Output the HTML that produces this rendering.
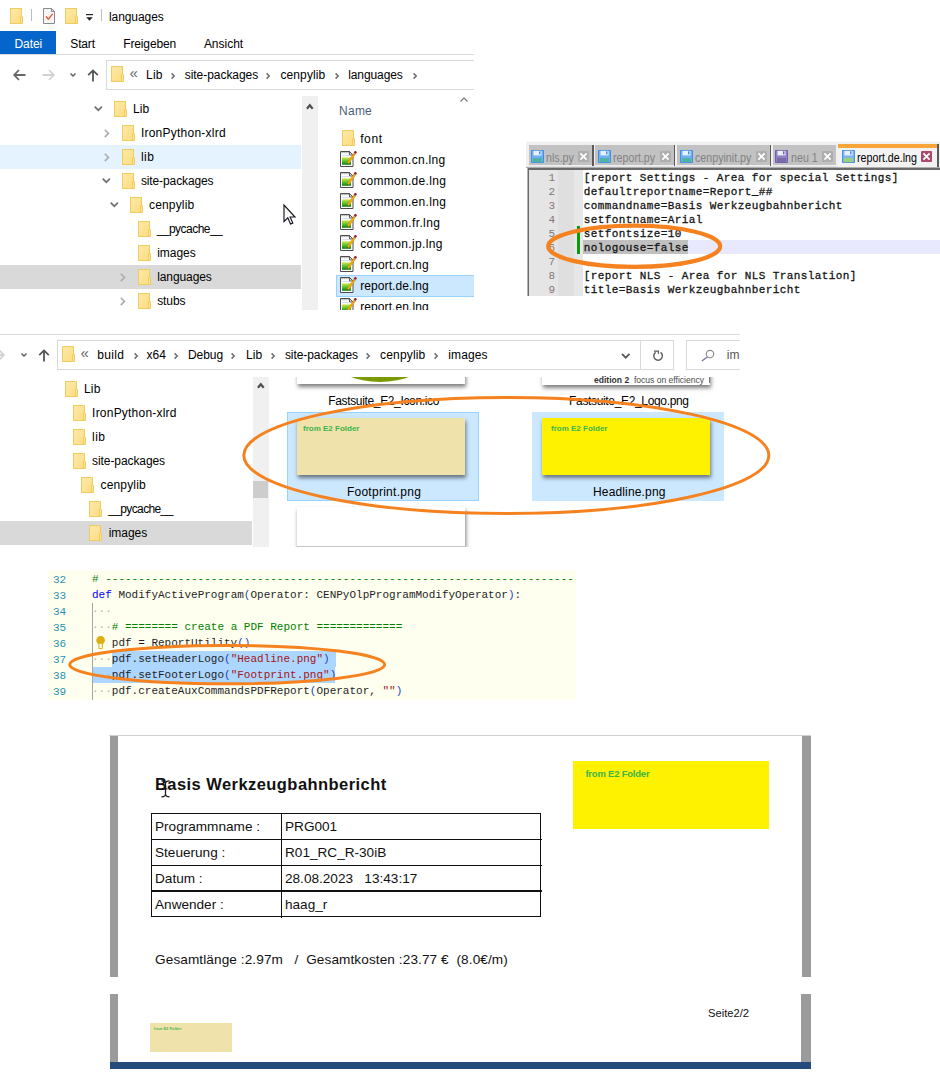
<!DOCTYPE html>
<html lang="de">
<head>
<meta charset="utf-8">
<title>languages</title>
<style>
html,body{margin:0;padding:0;background:#fff;}
body{width:940px;height:1072px;position:relative;overflow:hidden;font-family:"Liberation Sans",sans-serif;font-size:12px;color:#000;}
.a{position:absolute;}
.t{position:absolute;white-space:pre;line-height:16px;height:16px;font-size:12px;color:#000;}
svg{position:absolute;overflow:visible;}
.mono{font-family:"Liberation Mono",monospace;}
.fo{position:absolute;width:10px;height:14px;border:1px solid #efcb62;background:linear-gradient(135deg,#fde9a6,#fbdd83);border-radius:0.5px;}
.fo:after{content:"";position:absolute;right:-2px;bottom:-1px;width:1px;height:6px;border:1px solid #efcb62;background:#fde595;border-radius:1px 1px 0 0;}
</style>
</head>
<body>
<svg width="0" height="0" style="left:0;top:0;"><defs><linearGradient id="lg" x1="0" y1="0" x2="0" y2="1"><stop offset="0" stop-color="#d4e646"/><stop offset="0.55" stop-color="#4fbf2a"/><stop offset="1" stop-color="#0c7f10"/></linearGradient></defs></svg>
<div id="ex1" class="a" style="left:0;top:0;width:940px;height:1072px;clip-path:inset(0px 466px 762px 0px);">
<div class="a" style="left:0px;top:0px;width:474px;height:310px;background:#fff;"></div>
<div class="fo" style="left:10px;top:7.5px;"></div>
<div class="a" style="left:31px;top:9px;width:1px;height:12px;background:#bdbdbd;"></div>
<svg style="left:43px;top:8px;" width="13" height="16" viewBox="0 0 13 16"><path d="M0.5 0.5h8l3 3v12h-11z" fill="#f6f6f6" stroke="#8a8a8a" stroke-width="1"/><path d="M8.5 0.5v3h3" fill="none" stroke="#8a8a8a" stroke-width="1"/><path d="M3 8.5l2.3 2.6 4.4-5.2" fill="none" stroke="#e8562a" stroke-width="1.4"/></svg>
<div class="fo" style="left:65px;top:8px;"></div>
<svg style="left:86px;top:14px;" width="7" height="8" viewBox="0 0 7 8"><rect x="0" y="0" width="7" height="1.2" fill="#222"/><path d="M0.2 3.2h6.6L3.5 6.8z" fill="#222"/></svg>
<div class="a" style="left:101px;top:9px;width:1px;height:12px;background:#bdbdbd;"></div>
<span class="t" style="left:108.98px;top:8.5px;letter-spacing:-0.072px;">languages</span>
<div class="a" style="left:0px;top:31px;width:56px;height:23px;background:#0665cb;"></div>
<span class="t" style="left:14.38px;top:35.7px;color:#fff;letter-spacing:-0.035px;">Datei</span>
<span class="t" style="left:70.28px;top:35.7px;letter-spacing:-0.141px;">Start</span>
<span class="t" style="left:123.28px;top:35.7px;letter-spacing:-0.145px;">Freigeben</span>
<span class="t" style="left:203.88px;top:35.7px;letter-spacing:-0.017px;">Ansicht</span>
<div class="a" style="left:0px;top:54px;width:474px;height:1px;background:#dadbdc;"></div>
<svg style="left:13px;top:69px;" width="13" height="12" viewBox="0 0 13 12"><path d="M12.5 6H1.4M6 1L1.2 6l4.8 5" fill="none" stroke="#666" stroke-width="1.8"/></svg>
<svg style="left:42px;top:69px;" width="13" height="12" viewBox="0 0 13 12"><path d="M0.5 6H11.6M7 1l4.8 5-4.8 5" fill="none" stroke="#d2d2d2" stroke-width="1.8"/></svg>
<svg style="left:70px;top:72.5px;" width="6" height="4" viewBox="0 0 6 4"><path d="M0.5 0.5L3 3 5.5 0.5" fill="none" stroke="#5a5a5a" stroke-width="1.4"/></svg>
<svg style="left:87px;top:68.5px;" width="12" height="13" viewBox="0 0 12 13"><path d="M6 12.5V1.6M1.2 6.2l4.8-4.8 4.8 4.8" fill="none" stroke="#555" stroke-width="1.8"/></svg>
<div class="a" style="left:106px;top:60px;width:380px;height:28px;border:1px solid #d9d9d9;background:#fff;"></div>
<div class="fo" style="left:111px;top:66px;"></div>
<span class="t" style="left:129.5px;top:65.2px;font-size:15px;color:#666;">«</span>
<span class="t" style="left:145.98px;top:67px;letter-spacing:0.241px;">Lib</span>
<svg style="left:171px;top:72.5px;" width="4" height="6" viewBox="0 0 4 6"><path d="M0.6 0.4 L3.2 3 L0.6 5.6" fill="none" stroke="#6d6d6d" stroke-width="1.5"/></svg>
<span class="t" style="left:184.78px;top:67px;letter-spacing:-0.047px;">site-packages</span>
<svg style="left:266px;top:72.5px;" width="4" height="6" viewBox="0 0 4 6"><path d="M0.6 0.4 L3.2 3 L0.6 5.6" fill="none" stroke="#6d6d6d" stroke-width="1.5"/></svg>
<span class="t" style="left:280.48px;top:67px;letter-spacing:0.101px;">cenpylib</span>
<svg style="left:335px;top:72.5px;" width="4" height="6" viewBox="0 0 4 6"><path d="M0.6 0.4 L3.2 3 L0.6 5.6" fill="none" stroke="#6d6d6d" stroke-width="1.5"/></svg>
<span class="t" style="left:348.18px;top:67px;letter-spacing:-0.095px;">languages</span>
<svg style="left:413px;top:72.5px;" width="4" height="6" viewBox="0 0 4 6"><path d="M0.6 0.4 L3.2 3 L0.6 5.6" fill="none" stroke="#6d6d6d" stroke-width="1.5"/></svg>
<div class="a" style="left:0px;top:145px;width:301px;height:24px;background:#e5f3ff;"></div>
<div class="a" style="left:0px;top:265px;width:301px;height:24px;background:#d9d9d9;"></div>
<div class="fo" style="left:114px;top:101px;"></div>
<span class="t" style="left:132.98px;top:101px;letter-spacing:0.075px;">Lib</span>
<svg style="left:94.39999999999999px;top:106.2px;" width="8.6" height="5" viewBox="0 0 8.6 5"><path d="M0.7 0.7 L4.3 4.2 L7.9 0.7" fill="none" stroke="#727272" stroke-width="1.7"/></svg>
<div class="fo" style="left:122px;top:125px;"></div>
<span class="t" style="left:140.88px;top:125px;letter-spacing:0.238px;">IronPython-xlrd</span>
<svg style="left:104px;top:129.1px;" width="5.5" height="9" viewBox="0 0 5.5 9"><path d="M0.8 0.7 L4.5 4.4 L0.8 8.1" fill="none" stroke="#adadad" stroke-width="1.6"/></svg>
<div class="fo" style="left:122px;top:149px;"></div>
<span class="t" style="left:140.88px;top:149px;letter-spacing:0.475px;">lib</span>
<svg style="left:104px;top:153.1px;" width="5.5" height="9" viewBox="0 0 5.5 9"><path d="M0.8 0.7 L4.5 4.4 L0.8 8.1" fill="none" stroke="#adadad" stroke-width="1.6"/></svg>
<div class="fo" style="left:122px;top:173px;"></div>
<span class="t" style="left:140.88px;top:173px;letter-spacing:-0.108px;">site-packages</span>
<svg style="left:101.8px;top:178.2px;" width="8.6" height="5" viewBox="0 0 8.6 5"><path d="M0.7 0.7 L4.3 4.2 L7.9 0.7" fill="none" stroke="#727272" stroke-width="1.7"/></svg>
<div class="fo" style="left:130px;top:197px;"></div>
<span class="t" style="left:148.98px;top:197px;letter-spacing:0.176px;">cenpylib</span>
<svg style="left:109.6px;top:202.2px;" width="8.6" height="5" viewBox="0 0 8.6 5"><path d="M0.7 0.7 L4.3 4.2 L7.9 0.7" fill="none" stroke="#727272" stroke-width="1.7"/></svg>
<div class="fo" style="left:138px;top:221px;"></div>
<span class="t" style="left:156.68px;top:221px;letter-spacing:-0.532px;">__pycache__</span>
<div class="fo" style="left:138px;top:245px;"></div>
<span class="t" style="left:157.18px;top:245px;letter-spacing:-0.041px;">images</span>
<div class="fo" style="left:138px;top:269px;"></div>
<span class="t" style="left:157.18px;top:269px;letter-spacing:-0.095px;">languages</span>
<svg style="left:120px;top:273.1px;" width="5.5" height="9" viewBox="0 0 5.5 9"><path d="M0.8 0.7 L4.5 4.4 L0.8 8.1" fill="none" stroke="#adadad" stroke-width="1.6"/></svg>
<div class="fo" style="left:138px;top:293px;"></div>
<span class="t" style="left:157.18px;top:293px;letter-spacing:-0.09px;">stubs</span>
<svg style="left:120px;top:297.1px;" width="5.5" height="9" viewBox="0 0 5.5 9"><path d="M0.8 0.7 L4.5 4.4 L0.8 8.1" fill="none" stroke="#adadad" stroke-width="1.6"/></svg>
<div class="a" style="left:302px;top:96px;width:16px;height:214px;background:#f0f0f0;"></div>
<svg style="left:306px;top:103px;" width="8" height="6" viewBox="0 0 8 6"><path d="M0.9 5.8L3.8 2.2 6.7 5.8" fill="none" stroke="#505050" stroke-width="2.2"/></svg>
<span class="t" style="left:339.08px;top:102.5px;color:#4c607a;letter-spacing:0.231px;">Name</span>
<svg style="left:459.5px;top:96.5px;" width="8" height="5" viewBox="0 0 8 5"><path d="M0.5 4.5L4 1 7.5 4.5" fill="none" stroke="#7a7a7a" stroke-width="1.2"/></svg>
<div class="a" style="left:336px;top:275px;width:150px;height:20px;border:1px solid #99d1ff;background:#cce8ff;"></div>
<div class="fo" style="left:342px;top:130px;"></div>
<span class="t" style="left:360.18px;top:131.3px;letter-spacing:0.606px;">font</span>
<svg style="left:340px;top:150px;" width="17" height="17" viewBox="0 0 17 17"><path d="M0.5 1.5h9l3.5 3.5v11.5h-12.5z" fill="#fff" stroke="#4c4c4c" stroke-width="1"/><path d="M9.5 1.5v3.5h3.5z" fill="#e4e4e4" stroke="#4c4c4c" stroke-width="0.9"/><path d="M1.6 2.6h7" stroke="#8a8a8a" stroke-width="1.2" stroke-dasharray="1 1"/><path d="M2 5.6h7" stroke="#c9d8ee" stroke-width="0.9"/><rect x="2" y="7.4" width="9" height="7.4" fill="url(#lg)"/><path d="M14.3 2.2 L16 3.4 L9.2 13.2 L7.2 14.2 L7.6 12 Z" fill="#f7a916" stroke="#c07a08" stroke-width="0.4"/><path d="M14.3 2.2 L16 3.4 L15.3 4.4 L13.6 3.2 Z" fill="#9aa6b8"/><circle cx="15.4" cy="2.2" r="1.25" fill="#a01818"/><path d="M7.2 14.2 L7.45 12.9 L8.3 13.6 Z" fill="#3a2a1a"/></svg>
<span class="t" style="left:360.18px;top:152.3px;letter-spacing:0.305px;">common.cn.lng</span>
<svg style="left:340px;top:171px;" width="17" height="17" viewBox="0 0 17 17"><path d="M0.5 1.5h9l3.5 3.5v11.5h-12.5z" fill="#fff" stroke="#4c4c4c" stroke-width="1"/><path d="M9.5 1.5v3.5h3.5z" fill="#e4e4e4" stroke="#4c4c4c" stroke-width="0.9"/><path d="M1.6 2.6h7" stroke="#8a8a8a" stroke-width="1.2" stroke-dasharray="1 1"/><path d="M2 5.6h7" stroke="#c9d8ee" stroke-width="0.9"/><rect x="2" y="7.4" width="9" height="7.4" fill="url(#lg)"/><path d="M14.3 2.2 L16 3.4 L9.2 13.2 L7.2 14.2 L7.6 12 Z" fill="#f7a916" stroke="#c07a08" stroke-width="0.4"/><path d="M14.3 2.2 L16 3.4 L15.3 4.4 L13.6 3.2 Z" fill="#9aa6b8"/><circle cx="15.4" cy="2.2" r="1.25" fill="#a01818"/><path d="M7.2 14.2 L7.45 12.9 L8.3 13.6 Z" fill="#3a2a1a"/></svg>
<span class="t" style="left:360.18px;top:173.3px;letter-spacing:0.299px;">common.de.lng</span>
<svg style="left:340px;top:192px;" width="17" height="17" viewBox="0 0 17 17"><path d="M0.5 1.5h9l3.5 3.5v11.5h-12.5z" fill="#fff" stroke="#4c4c4c" stroke-width="1"/><path d="M9.5 1.5v3.5h3.5z" fill="#e4e4e4" stroke="#4c4c4c" stroke-width="0.9"/><path d="M1.6 2.6h7" stroke="#8a8a8a" stroke-width="1.2" stroke-dasharray="1 1"/><path d="M2 5.6h7" stroke="#c9d8ee" stroke-width="0.9"/><rect x="2" y="7.4" width="9" height="7.4" fill="url(#lg)"/><path d="M14.3 2.2 L16 3.4 L9.2 13.2 L7.2 14.2 L7.6 12 Z" fill="#f7a916" stroke="#c07a08" stroke-width="0.4"/><path d="M14.3 2.2 L16 3.4 L15.3 4.4 L13.6 3.2 Z" fill="#9aa6b8"/><circle cx="15.4" cy="2.2" r="1.25" fill="#a01818"/><path d="M7.2 14.2 L7.45 12.9 L8.3 13.6 Z" fill="#3a2a1a"/></svg>
<span class="t" style="left:360.18px;top:194.3px;letter-spacing:0.299px;">common.en.lng</span>
<svg style="left:340px;top:213px;" width="17" height="17" viewBox="0 0 17 17"><path d="M0.5 1.5h9l3.5 3.5v11.5h-12.5z" fill="#fff" stroke="#4c4c4c" stroke-width="1"/><path d="M9.5 1.5v3.5h3.5z" fill="#e4e4e4" stroke="#4c4c4c" stroke-width="0.9"/><path d="M1.6 2.6h7" stroke="#8a8a8a" stroke-width="1.2" stroke-dasharray="1 1"/><path d="M2 5.6h7" stroke="#c9d8ee" stroke-width="0.9"/><rect x="2" y="7.4" width="9" height="7.4" fill="url(#lg)"/><path d="M14.3 2.2 L16 3.4 L9.2 13.2 L7.2 14.2 L7.6 12 Z" fill="#f7a916" stroke="#c07a08" stroke-width="0.4"/><path d="M14.3 2.2 L16 3.4 L15.3 4.4 L13.6 3.2 Z" fill="#9aa6b8"/><circle cx="15.4" cy="2.2" r="1.25" fill="#a01818"/><path d="M7.2 14.2 L7.45 12.9 L8.3 13.6 Z" fill="#3a2a1a"/></svg>
<span class="t" style="left:360.18px;top:215.3px;letter-spacing:0.359px;">common.fr.lng</span>
<svg style="left:340px;top:234px;" width="17" height="17" viewBox="0 0 17 17"><path d="M0.5 1.5h9l3.5 3.5v11.5h-12.5z" fill="#fff" stroke="#4c4c4c" stroke-width="1"/><path d="M9.5 1.5v3.5h3.5z" fill="#e4e4e4" stroke="#4c4c4c" stroke-width="0.9"/><path d="M1.6 2.6h7" stroke="#8a8a8a" stroke-width="1.2" stroke-dasharray="1 1"/><path d="M2 5.6h7" stroke="#c9d8ee" stroke-width="0.9"/><rect x="2" y="7.4" width="9" height="7.4" fill="url(#lg)"/><path d="M14.3 2.2 L16 3.4 L9.2 13.2 L7.2 14.2 L7.6 12 Z" fill="#f7a916" stroke="#c07a08" stroke-width="0.4"/><path d="M14.3 2.2 L16 3.4 L15.3 4.4 L13.6 3.2 Z" fill="#9aa6b8"/><circle cx="15.4" cy="2.2" r="1.25" fill="#a01818"/><path d="M7.2 14.2 L7.45 12.9 L8.3 13.6 Z" fill="#3a2a1a"/></svg>
<span class="t" style="left:360.18px;top:236.3px;letter-spacing:0.353px;">common.jp.lng</span>
<svg style="left:340px;top:255px;" width="17" height="17" viewBox="0 0 17 17"><path d="M0.5 1.5h9l3.5 3.5v11.5h-12.5z" fill="#fff" stroke="#4c4c4c" stroke-width="1"/><path d="M9.5 1.5v3.5h3.5z" fill="#e4e4e4" stroke="#4c4c4c" stroke-width="0.9"/><path d="M1.6 2.6h7" stroke="#8a8a8a" stroke-width="1.2" stroke-dasharray="1 1"/><path d="M2 5.6h7" stroke="#c9d8ee" stroke-width="0.9"/><rect x="2" y="7.4" width="9" height="7.4" fill="url(#lg)"/><path d="M14.3 2.2 L16 3.4 L9.2 13.2 L7.2 14.2 L7.6 12 Z" fill="#f7a916" stroke="#c07a08" stroke-width="0.4"/><path d="M14.3 2.2 L16 3.4 L15.3 4.4 L13.6 3.2 Z" fill="#9aa6b8"/><circle cx="15.4" cy="2.2" r="1.25" fill="#a01818"/><path d="M7.2 14.2 L7.45 12.9 L8.3 13.6 Z" fill="#3a2a1a"/></svg>
<span class="t" style="left:360.18px;top:257.3px;letter-spacing:0.141px;">report.cn.lng</span>
<svg style="left:340px;top:276px;" width="17" height="17" viewBox="0 0 17 17"><path d="M0.5 1.5h9l3.5 3.5v11.5h-12.5z" fill="#fff" stroke="#4c4c4c" stroke-width="1"/><path d="M9.5 1.5v3.5h3.5z" fill="#e4e4e4" stroke="#4c4c4c" stroke-width="0.9"/><path d="M1.6 2.6h7" stroke="#8a8a8a" stroke-width="1.2" stroke-dasharray="1 1"/><path d="M2 5.6h7" stroke="#c9d8ee" stroke-width="0.9"/><rect x="2" y="7.4" width="9" height="7.4" fill="url(#lg)"/><path d="M14.3 2.2 L16 3.4 L9.2 13.2 L7.2 14.2 L7.6 12 Z" fill="#f7a916" stroke="#c07a08" stroke-width="0.4"/><path d="M14.3 2.2 L16 3.4 L15.3 4.4 L13.6 3.2 Z" fill="#9aa6b8"/><circle cx="15.4" cy="2.2" r="1.25" fill="#a01818"/><path d="M7.2 14.2 L7.45 12.9 L8.3 13.6 Z" fill="#3a2a1a"/></svg>
<span class="t" style="left:360.18px;top:278.3px;letter-spacing:0.088px;">report.de.lng</span>
<svg style="left:340px;top:297px;" width="17" height="17" viewBox="0 0 17 17"><path d="M0.5 1.5h9l3.5 3.5v11.5h-12.5z" fill="#fff" stroke="#4c4c4c" stroke-width="1"/><path d="M9.5 1.5v3.5h3.5z" fill="#e4e4e4" stroke="#4c4c4c" stroke-width="0.9"/><path d="M1.6 2.6h7" stroke="#8a8a8a" stroke-width="1.2" stroke-dasharray="1 1"/><path d="M2 5.6h7" stroke="#c9d8ee" stroke-width="0.9"/><rect x="2" y="7.4" width="9" height="7.4" fill="url(#lg)"/><path d="M14.3 2.2 L16 3.4 L9.2 13.2 L7.2 14.2 L7.6 12 Z" fill="#f7a916" stroke="#c07a08" stroke-width="0.4"/><path d="M14.3 2.2 L16 3.4 L15.3 4.4 L13.6 3.2 Z" fill="#9aa6b8"/><circle cx="15.4" cy="2.2" r="1.25" fill="#a01818"/><path d="M7.2 14.2 L7.45 12.9 L8.3 13.6 Z" fill="#3a2a1a"/></svg>
<span class="t" style="left:360.18px;top:299.3px;letter-spacing:0.088px;">report.en.lng</span>
<svg style="left:283px;top:204px;" width="13" height="21" viewBox="0 0 13 21"><path d="M1 1v16.6l3.8-3.8 2.7 6.3 2.3-1-2.7-6.1H12z" fill="#fff" stroke="#14141e" stroke-width="1.15"/></svg>
</div>
<div id="npp" class="a" style="left:0;top:0;width:940px;height:1072px;clip-path:inset(141px 0px 776px 526px);">
<div class="a" style="left:526px;top:141px;width:414px;height:155px;background:#fff;"></div>
<div class="a" style="left:526px;top:141px;width:414px;height:27px;background:#f0f0f0;"></div>
<div class="a" style="left:526px;top:141px;width:414px;height:1px;background:#fafafa;"></div>
<div class="a" style="left:528.5px;top:145.3px;width:63.799999999999955px;height:20.2px;background:#c2c2c2;"></div>
<div class="a" style="left:592.3px;top:145px;width:1.4px;height:21px;background:#5a5a5a;"></div>
<svg style="left:531.0px;top:150px;" width="13" height="13" viewBox="0 0 13 13"><rect x="0" y="0" width="13" height="13" rx="1" fill="#3f8fe8"/><rect x="1" y="1" width="11" height="11" fill="#6fb0f5"/><rect x="2.5" y="0.8" width="8" height="4.6" fill="#e8f0fa"/><rect x="8" y="1.3" width="1.5" height="3" fill="#3f8fe8"/><rect x="2" y="8" width="9" height="4.2" fill="#4fb3a0"/></svg>
<span class="t" style="left:546.1px;top:149.5px;font-size:12px;color:#828282;transform-origin:0 50%;transform:scaleX(0.89);">nls.py</span>
<svg style="left:578.3px;top:151px;" width="11" height="11" viewBox="0 0 11 11"><rect x="0" y="0" width="11" height="11" rx="1" fill="#aeaeae"/><path d="M2.4 2.4L8.6 8.6M8.6 2.4L2.4 8.6" stroke="#fff" stroke-width="1.8"/></svg>
<div class="a" style="left:595px;top:145.3px;width:78.79999999999995px;height:20.2px;background:#c2c2c2;"></div>
<div class="a" style="left:673.8px;top:145px;width:1.4px;height:21px;background:#5a5a5a;"></div>
<svg style="left:597.5px;top:150px;" width="13" height="13" viewBox="0 0 13 13"><rect x="0" y="0" width="13" height="13" rx="1" fill="#3f8fe8"/><rect x="1" y="1" width="11" height="11" fill="#6fb0f5"/><rect x="2.5" y="0.8" width="8" height="4.6" fill="#e8f0fa"/><rect x="8" y="1.3" width="1.5" height="3" fill="#3f8fe8"/><rect x="2" y="8" width="9" height="4.2" fill="#4fb3a0"/></svg>
<span class="t" style="left:612.6px;top:149.5px;font-size:12px;color:#828282;transform-origin:0 50%;transform:scaleX(0.89);">report.py</span>
<svg style="left:659.8px;top:151px;" width="11" height="11" viewBox="0 0 11 11"><rect x="0" y="0" width="11" height="11" rx="1" fill="#aeaeae"/><path d="M2.4 2.4L8.6 8.6M8.6 2.4L2.4 8.6" stroke="#fff" stroke-width="1.8"/></svg>
<div class="a" style="left:677px;top:145.3px;width:92.5px;height:20.2px;background:#c2c2c2;"></div>
<div class="a" style="left:769.5px;top:145px;width:1.4px;height:21px;background:#5a5a5a;"></div>
<svg style="left:679.5px;top:150px;" width="13" height="13" viewBox="0 0 13 13"><rect x="0" y="0" width="13" height="13" rx="1" fill="#3f8fe8"/><rect x="1" y="1" width="11" height="11" fill="#6fb0f5"/><rect x="2.5" y="0.8" width="8" height="4.6" fill="#e8f0fa"/><rect x="8" y="1.3" width="1.5" height="3" fill="#3f8fe8"/><rect x="2" y="8" width="9" height="4.2" fill="#4fb3a0"/></svg>
<span class="t" style="left:694.6px;top:149.5px;font-size:12px;color:#828282;transform-origin:0 50%;transform:scaleX(0.89);">cenpyinit.py</span>
<svg style="left:755.5px;top:151px;" width="11" height="11" viewBox="0 0 11 11"><rect x="0" y="0" width="11" height="11" rx="1" fill="#aeaeae"/><path d="M2.4 2.4L8.6 8.6M8.6 2.4L2.4 8.6" stroke="#fff" stroke-width="1.8"/></svg>
<div class="a" style="left:773px;top:145.3px;width:63.299999999999955px;height:20.2px;background:#c2c2c2;"></div>
<svg style="left:775.2px;top:150px;" width="13" height="13" viewBox="0 0 13 13"><rect x="0" y="0" width="13" height="13" rx="1" fill="#7060b0"/><rect x="1" y="1" width="11" height="11" fill="#9080c8"/><rect x="2.5" y="0.8" width="8" height="4.6" fill="#e8f0fa"/><rect x="8" y="1.3" width="1.5" height="3" fill="#7060b0"/><rect x="2" y="8" width="9" height="4.2" fill="#7a6aa8"/></svg>
<span class="t" style="left:790.6px;top:149.5px;font-size:12px;color:#828282;transform-origin:0 50%;transform:scaleX(0.89);">neu 1</span>
<svg style="left:822.3px;top:151px;" width="11" height="11" viewBox="0 0 11 11"><rect x="0" y="0" width="11" height="11" rx="1" fill="#aeaeae"/><path d="M2.4 2.4L8.6 8.6M8.6 2.4L2.4 8.6" stroke="#fff" stroke-width="1.8"/></svg>
<div class="a" style="left:838px;top:143.5px;width:99.5px;height:4.5px;background:#f9a53a;"></div>
<div class="a" style="left:838px;top:148px;width:99.5px;height:20px;background:#f2f2f2;"></div>
<div class="a" style="left:937px;top:144px;width:1.5px;height:23px;background:#5a5a5a;"></div>
<svg style="left:842px;top:150px;" width="13" height="13" viewBox="0 0 13 13"><rect x="0" y="0" width="13" height="13" rx="1" fill="#4a8fe0"/><rect x="1" y="1" width="11" height="11" fill="#7db4f2"/><rect x="2.5" y="0.8" width="8" height="4.6" fill="#e8f0fa"/><rect x="8" y="1.3" width="1.5" height="3" fill="#4a8fe0"/><rect x="2" y="8" width="9" height="4.2" fill="#9ccf7a"/></svg>
<span class="t" style="left:857px;top:149.5px;font-size:12px;color:#000;transform-origin:0 50%;transform:scaleX(0.89);">report.de.lng</span>
<svg style="left:921px;top:151px;" width="11" height="11" viewBox="0 0 11 11"><rect x="0" y="0" width="11" height="11" rx="1" fill="#a94a6c"/><path d="M2.4 2.4L8.6 8.6M8.6 2.4L2.4 8.6" stroke="#fff" stroke-width="1.8"/></svg>
<div class="a" style="left:526px;top:165.5px;width:312px;height:2.2px;background:#e2e2e2;"></div>
<div class="a" style="left:526px;top:167.2px;width:414px;height:0.8px;background:#b0b0b0;"></div>
<div class="a" style="left:527.5px;top:168.3px;width:413px;height:1.6px;background:#6a6a6a;"></div>
<div class="a" style="left:526.6px;top:168.3px;width:1.3px;height:128px;background:#b4b4b4;"></div>
<div class="a" style="left:527.8px;top:168.3px;width:1.5px;height:128px;background:#6a6a6a;"></div>
<div class="a" style="left:529px;top:169.8px;width:29px;height:127px;background:#e5e5e5;"></div>
<div class="a" style="left:558px;top:169.8px;width:16px;height:127px;background:#dfdfdf;"></div>
<div class="a" style="left:574px;top:169.8px;width:9px;height:127px;background:#e7e7e7;"></div>
<div class="a" style="left:583px;top:240px;width:357px;height:14px;background:#e8e8ff;"></div>
<div class="a" style="left:583px;top:240px;width:105px;height:14px;background:#c0c0c0;"></div>
<div class="a" style="left:577px;top:226px;width:3.2px;height:28px;background:#0a9a0a;"></div>
<span class="t mono" style="left:548.5px;top:170px;font-size:11px;color:#857878;">1</span>
<span class="t mono" style="left:583.7px;top:170px;font-size:11px;color:#161616;letter-spacing:0.4px;-webkit-text-stroke:0.3px #161616;">[report Settings - Area for special Settings]</span>
<span class="t mono" style="left:548.5px;top:184px;font-size:11px;color:#857878;">2</span>
<span class="t mono" style="left:583.7px;top:184px;font-size:11px;color:#161616;letter-spacing:0.4px;-webkit-text-stroke:0.3px #161616;">defaultreportname=Report_##</span>
<span class="t mono" style="left:548.5px;top:198px;font-size:11px;color:#857878;">3</span>
<span class="t mono" style="left:583.7px;top:198px;font-size:11px;color:#161616;letter-spacing:0.4px;-webkit-text-stroke:0.3px #161616;">commandname=Basis Werkzeugbahnbericht</span>
<span class="t mono" style="left:548.5px;top:212px;font-size:11px;color:#857878;">4</span>
<span class="t mono" style="left:583.7px;top:212px;font-size:11px;color:#161616;letter-spacing:0.4px;-webkit-text-stroke:0.3px #161616;">setfontname=Arial</span>
<span class="t mono" style="left:548.5px;top:226px;font-size:11px;color:#857878;">5</span>
<span class="t mono" style="left:583.7px;top:226px;font-size:11px;color:#161616;letter-spacing:0.4px;-webkit-text-stroke:0.3px #161616;">setfontsize=10</span>
<span class="t mono" style="left:548.5px;top:240px;font-size:11px;color:#857878;">6</span>
<span class="t mono" style="left:583.7px;top:240px;font-size:11px;color:#161616;letter-spacing:0.4px;-webkit-text-stroke:0.3px #161616;">nologouse=false</span>
<span class="t mono" style="left:548.5px;top:254px;font-size:11px;color:#857878;">7</span>
<span class="t mono" style="left:548.5px;top:268px;font-size:11px;color:#857878;">8</span>
<span class="t mono" style="left:583.7px;top:268px;font-size:11px;color:#161616;letter-spacing:0.4px;-webkit-text-stroke:0.3px #161616;">[report NLS - Area for NLS Translation]</span>
<span class="t mono" style="left:548.5px;top:282px;font-size:11px;color:#857878;">9</span>
<span class="t mono" style="left:583.7px;top:282px;font-size:11px;color:#161616;letter-spacing:0.4px;-webkit-text-stroke:0.3px #161616;">title=Basis Werkzeugbahnbericht</span>
</div>
<div id="ex2" class="a" style="left:0;top:0;width:940px;height:1072px;clip-path:inset(334px 200px 525px 0px);">
<div class="a" style="left:0px;top:334px;width:740px;height:213px;background:#fff;"></div>
<div class="a" style="left:0px;top:334px;width:740px;height:1px;background:#dadbdc;"></div>
<svg style="left:-8px;top:349px;" width="13" height="12" viewBox="0 0 13 12"><path d="M0.5 6H11.6M7 1l4.8 5-4.8 5" fill="none" stroke="#d2d2d2" stroke-width="1.8"/></svg>
<svg style="left:20.5px;top:352.5px;" width="6" height="4" viewBox="0 0 6 4"><path d="M0.5 0.5L3 3 5.5 0.5" fill="none" stroke="#5a5a5a" stroke-width="1.4"/></svg>
<svg style="left:38px;top:348.5px;" width="12" height="13" viewBox="0 0 12 13"><path d="M6 12.5V1.6M1.2 6.2l4.8-4.8 4.8 4.8" fill="none" stroke="#555" stroke-width="1.8"/></svg>
<div class="a" style="left:57px;top:340px;width:582.5px;height:28px;border:1px solid #d9d9d9;background:#fff;"></div>
<div class="a" style="left:641px;top:340px;width:32px;height:28px;border:1px solid #d9d9d9;border-left:none;background:#fff;"></div>
<div class="a" style="left:686px;top:340px;width:60px;height:28px;border:1px solid #d9d9d9;background:#fff;"></div>
<div class="a" style="left:640px;top:341px;width:1px;height:28px;background:#d9d9d9;"></div>
<div class="fo" style="left:62px;top:346px;"></div>
<span class="t" style="left:80.5px;top:345.2px;font-size:15px;color:#666;">«</span>
<span class="t" style="left:97.18px;top:347px;letter-spacing:0.376px;">build</span>
<svg style="left:134px;top:352.5px;" width="4" height="6" viewBox="0 0 4 6"><path d="M0.6 0.4 L3.2 3 L0.6 5.6" fill="none" stroke="#6d6d6d" stroke-width="1.5"/></svg>
<span class="t" style="left:146.48px;top:347px;letter-spacing:-0.006px;">x64</span>
<svg style="left:174.4px;top:352.5px;" width="4" height="6" viewBox="0 0 4 6"><path d="M0.6 0.4 L3.2 3 L0.6 5.6" fill="none" stroke="#6d6d6d" stroke-width="1.5"/></svg>
<span class="t" style="left:187.88px;top:347px;letter-spacing:-0.007px;">Debug</span>
<svg style="left:231px;top:352.5px;" width="4" height="6" viewBox="0 0 4 6"><path d="M0.6 0.4 L3.2 3 L0.6 5.6" fill="none" stroke="#6d6d6d" stroke-width="1.5"/></svg>
<span class="t" style="left:246.08px;top:347px;letter-spacing:0.075px;">Lib</span>
<svg style="left:270.6px;top:352.5px;" width="4" height="6" viewBox="0 0 4 6"><path d="M0.6 0.4 L3.2 3 L0.6 5.6" fill="none" stroke="#6d6d6d" stroke-width="1.5"/></svg>
<span class="t" style="left:284.88px;top:347px;letter-spacing:-0.07px;">site-packages</span>
<svg style="left:366.4px;top:352.5px;" width="4" height="6" viewBox="0 0 4 6"><path d="M0.6 0.4 L3.2 3 L0.6 5.6" fill="none" stroke="#6d6d6d" stroke-width="1.5"/></svg>
<span class="t" style="left:380.08px;top:347px;letter-spacing:0.164px;">cenpylib</span>
<svg style="left:434.2px;top:352.5px;" width="4" height="6" viewBox="0 0 4 6"><path d="M0.6 0.4 L3.2 3 L0.6 5.6" fill="none" stroke="#6d6d6d" stroke-width="1.5"/></svg>
<span class="t" style="left:448.28px;top:347px;letter-spacing:0.125px;">images</span>
<svg style="left:621px;top:352.5px;" width="10" height="6" viewBox="0 0 10 6"><path d="M0.9 0.9L4.7 4.7 8.5 0.9" fill="none" stroke="#5a5a5a" stroke-width="1.9"/></svg>
<svg style="left:652px;top:349px;" width="13" height="13" viewBox="0 0 13 13"><path d="M8.57 3.38A4.3 4.3 0 1 1 3.63 3.38" fill="none" stroke="#5a5a5a" stroke-width="1.4"/><path d="M1.9 2.1h4.5v2.7" fill="none" stroke="#5a5a5a" stroke-width="1.3"/></svg>
<svg style="left:700.5px;top:348.5px;" width="13" height="13" viewBox="0 0 13 13"><circle cx="9" cy="5.1" r="3.7" fill="none" stroke="#8a8a8a" stroke-width="1.1"/><path d="M6.4 7.9L0.8 11.9" stroke="#7a6a9a" stroke-width="1.2"/></svg>
<span class="t" style="left:726.8px;top:347px;color:#555;">im</span>
<div class="a" style="left:0px;top:521px;width:252px;height:24px;background:#d9d9d9;"></div>
<div class="fo" style="left:65px;top:381px;"></div>
<span class="t" style="left:83.88px;top:381px;letter-spacing:0.275px;">Lib</span>
<div class="fo" style="left:73px;top:405px;"></div>
<span class="t" style="left:92.08px;top:405px;letter-spacing:0.218px;">IronPython-xlrd</span>
<div class="fo" style="left:73px;top:429px;"></div>
<span class="t" style="left:92.08px;top:429px;letter-spacing:0.475px;">lib</span>
<div class="fo" style="left:73px;top:453px;"></div>
<span class="t" style="left:92.08px;top:453px;letter-spacing:-0.085px;">site-packages</span>
<div class="fo" style="left:81px;top:477px;"></div>
<span class="t" style="left:100.48px;top:477px;letter-spacing:0.176px;">cenpylib</span>
<div class="fo" style="left:89px;top:501px;"></div>
<span class="t" style="left:108.18px;top:501px;letter-spacing:-0.623px;">__pycache__</span>
<div class="fo" style="left:89px;top:525px;"></div>
<span class="t" style="left:108.68px;top:525px;letter-spacing:-0.041px;">images</span>
<div class="a" style="left:253px;top:377.2px;width:16px;height:170px;background:#f0f0f0;"></div>
<svg style="left:257px;top:382px;" width="8" height="6" viewBox="0 0 8 6"><path d="M0.9 5.8L3.8 2.2 6.7 5.8" fill="none" stroke="#505050" stroke-width="2.2"/></svg>
<div class="a" style="left:253px;top:481px;width:15px;height:16.5px;background:#cdcdcd;"></div>
<div class="a" style="left:280px;top:377.2px;width:460px;height:20px;overflow:hidden;"><div class="a" style="left:17px;top:-10px;width:168px;height:17.2px;background:#fff;box-shadow:1px 3px 4px rgba(0,0,0,0.5);"></div><div class="a" style="left:13.4px;top:-169px;width:174px;height:174px;border-radius:50%;background:#7b9b06;"></div><div class="a" style="left:262px;top:-10px;width:168px;height:17.4px;background:#fff;box-shadow:1px 3px 4px rgba(0,0,0,0.5);"></div></div>
<span class="t" style="left:328.28px;top:393px;letter-spacing:-0.349px;">Fastsuite_E2_Icon.ico</span>
<span class="t" style="left:594px;top:372.3px;font-size:8.55px;color:#4a4a4a;"><b style="color:#333">edition 2</b>  focus on efficiency</span>
<div class="a" style="left:708.6px;top:377.2px;width:1.6px;height:6px;background:#777;"></div>
<span class="t" style="left:569.08px;top:393px;letter-spacing:-0.344px;">Fastsuite_E2_Logo.png</span>
<div class="a" style="left:287px;top:412px;width:190px;height:87px;border:1px solid #99d1ff;background:#cce8ff;"></div>
<div class="a" style="left:297px;top:418px;width:168px;height:57px;background:#efe2ab;box-shadow:1px 3px 4px rgba(0,0,0,0.5);"></div>
<span class="t" style="left:303px;top:421.4px;font-size:8px;color:#3cb44a;font-weight:bold;">from E2 Folder</span>
<span class="t" style="left:346.88px;top:483.5px;letter-spacing:0.271px;">Footprint.png</span>
<div class="a" style="left:532px;top:412px;width:192px;height:88.5px;background:#cce8ff;"></div>
<div class="a" style="left:542px;top:418px;width:168px;height:56.5px;background:#fff200;box-shadow:1px 3px 4px rgba(0,0,0,0.5);"></div>
<span class="t" style="left:551px;top:420.9px;font-size:8px;color:#3cb44a;font-weight:bold;">from E2 Folder</span>
<span class="t" style="left:592.98px;top:483.5px;letter-spacing:0.159px;">Headline.png</span>
<div class="a" style="left:297px;top:507px;width:168px;height:39.5px;background:#fff;box-shadow:1px 3px 4px rgba(0,0,0,0.5);"></div>
<div class="a" style="left:297px;top:546px;width:169px;height:1px;background:#c4c4c4;"></div>
</div>
<div id="code" class="a" style="left:0;top:0;width:940px;height:1072px;clip-path:inset(570px 364px 372px 48px);">
<div class="a" style="left:48px;top:570px;width:528px;height:130px;background:#fffff0;"></div>
<div class="a" style="left:112px;top:651px;width:224px;height:16px;background:#add6ff;"></div>
<div class="a" style="left:92px;top:667px;width:243px;height:16px;background:#add6ff;"></div>
<div class="a" style="left:92.2px;top:603px;width:1px;height:97px;background:#a4a4a4;"></div>
<span class="t mono" style="left:53px;top:572px;font-size:11px;color:#2b91af;">32</span>
<span class="t mono" style="left:53px;top:588px;font-size:11px;color:#2b91af;">33</span>
<span class="t mono" style="left:53px;top:604px;font-size:11px;color:#2b91af;">34</span>
<span class="t mono" style="left:53px;top:620px;font-size:11px;color:#2b91af;">35</span>
<span class="t mono" style="left:53px;top:636px;font-size:11px;color:#2b91af;">36</span>
<span class="t mono" style="left:53px;top:652px;font-size:11px;color:#2b91af;">37</span>
<span class="t mono" style="left:53px;top:668px;font-size:11px;color:#2b91af;">38</span>
<span class="t mono" style="left:53px;top:684px;font-size:11px;color:#2b91af;">39</span>
<span class="t mono" style="left:92.0px;top:571px;font-size:11px;color:#1e1e1e;"><span style="color:#008000"># --------------------------------------------------------------------------------</span></span>
<span class="t mono" style="left:92.0px;top:587px;font-size:11px;color:#1e1e1e;"><span style="color:#0000ff">def</span> ModifyActiveProgram<span style="color:#1e3fbf">(</span>Operator: CENPyOlpProgramModifyOperator<span style="color:#1e3fbf">)</span>:</span>
<span class="t mono" style="left:92.0px;top:603px;font-size:11px;color:#1e1e1e;"><span style="color:#b4b4b4">···</span></span>
<span class="t mono" style="left:92.0px;top:619px;font-size:11px;color:#1e1e1e;"><span style="color:#b4b4b4">···</span><span style="color:#008000"># ======== create a PDF Report =============</span></span>
<span class="t mono" style="left:111.8px;top:635px;font-size:11px;color:#1e1e1e;">pdf = ReportUtility<span style="color:#1e3fbf">()</span></span>
<span class="t mono" style="left:92.0px;top:651px;font-size:11px;color:#1e1e1e;"><span style="color:#b4b4b4">···</span>pdf.setHeaderLogo<span style="color:#1e3fbf">(</span><span style="color:#a31515">"Headline.png"</span><span style="color:#1e3fbf">)</span></span>
<span class="t mono" style="left:92.0px;top:667px;font-size:11px;color:#1e1e1e;"><span style="color:#b4b4b4">···</span>pdf.setFooterLogo<span style="color:#1e3fbf">(</span><span style="color:#a31515">"Footprint.png"</span><span style="color:#1e3fbf">)</span></span>
<span class="t mono" style="left:92.0px;top:683px;font-size:11px;color:#1e1e1e;"><span style="color:#b4b4b4">···</span>pdf.createAuxCommandsPDFReport<span style="color:#1e3fbf">(</span>Operator, <span style="color:#a31515">""</span><span style="color:#1e3fbf">)</span></span>
<svg style="left:95.6px;top:636px;" width="10" height="14" viewBox="0 0 10 14"><circle cx="4.6" cy="4.2" r="4.3" fill="#ddb012"/><path d="M2.9 7.4h3.4v5.2H2.9z" fill="#fffff0" stroke="#ddb012" stroke-width="1"/></svg>
</div>
<div id="pdf" class="a" style="left:0;top:0;width:940px;height:1072px;clip-path:inset(735px 129px 0px 109px);">
<div class="a" style="left:109px;top:735px;width:702px;height:337px;background:#fff;"></div>
<div class="a" style="left:109px;top:735px;width:702px;height:1.2px;background:#d0d0d0;"></div>
<div class="a" style="left:109.5px;top:736px;width:8.5px;height:241px;background:#9b9b9b;"></div>
<div class="a" style="left:802px;top:736px;width:9px;height:241px;background:#9b9b9b;"></div>
<div class="a" style="left:573px;top:761px;width:196px;height:67.5px;background:#fff200;"></div>
<span class="t" style="left:585.43px;top:766px;font-size:9.5px;color:#3cb44a;letter-spacing:-0.222px;font-weight:bold;">from E2 Folder</span>
<span class="t" style="left:154.91px;top:775.6px;font-size:16.5px;color:#111;letter-spacing:0.444px;font-weight:bold;line-height:20px;height:20px;margin-top:-2px;">Basis Werkzeugbahnbericht</span>
<div class="a" style="left:151px;top:813px;width:388.3px;height:102.4px;border:1.2px solid #111;box-sizing:content-box;"></div>
<div class="a" style="left:151px;top:838.6px;width:390.7px;height:1.2px;background:#111;"></div>
<div class="a" style="left:151px;top:864.5px;width:390.7px;height:1.2px;background:#111;"></div>
<div class="a" style="left:151px;top:890.4px;width:390.7px;height:1.2px;background:#111;"></div>
<div class="a" style="left:281px;top:813px;width:1.2px;height:104.8px;background:#111;"></div>
<span class="t" style="left:155px;top:818.5px;font-size:13.6px;color:#111;">Programmname :</span>
<span class="t" style="left:285px;top:818.5px;font-size:13.6px;color:#111;">PRG001</span>
<span class="t" style="left:155px;top:844.5px;font-size:13.6px;color:#111;">Steuerung :</span>
<span class="t" style="left:285px;top:844.5px;font-size:13.6px;color:#111;">R01_RC_R-30iB</span>
<span class="t" style="left:155px;top:870.5px;font-size:13.6px;color:#111;">Datum :</span>
<span class="t" style="left:285px;top:870.5px;font-size:13.6px;color:#111;">28.08.2023   13:43:17</span>
<span class="t" style="left:155px;top:896.5px;font-size:13.6px;color:#111;">Anwender :</span>
<span class="t" style="left:285px;top:896.5px;font-size:13.6px;color:#111;">haag_r</span>
<span class="t" style="left:155.08px;top:951.5px;font-size:13.6px;color:#111;letter-spacing:0.095px;">Gesamtlänge :2.97m   /  Gesamtkosten :23.77 €  (8.0€/m)</span>
<div class="a" style="left:109px;top:977px;width:702px;height:17px;background:#fff;"></div>
<div class="a" style="left:109.5px;top:994px;width:8.5px;height:69px;background:#9b9b9b;"></div>
<div class="a" style="left:800.7px;top:994px;width:10.3px;height:69px;background:#9b9b9b;"></div>
<div class="a" style="left:109.5px;top:1062px;width:701.5px;height:6.5px;background:#254a7e;"></div>
<div class="a" style="left:150px;top:1022.5px;width:82px;height:29px;background:#efe2ab;"></div>
<span class="t" style="left:153.78px;top:1020.5px;font-size:3.6px;color:#3cb44a;letter-spacing:0.19px;font-weight:bold;">from E2 Folder</span>
<span class="t" style="left:708px;top:1005px;font-size:11.2px;color:#111;">Seite2/2</span>
<svg style="left:161px;top:780.2px;" width="9" height="18" viewBox="0 0 9 18"><path d="M0.5 0.8C3 0.8 4.5 1.6 4.5 3.5V14C4.5 16 3 16.8 0.5 16.8M8.5 0.8C6 0.8 4.5 1.6 4.5 3.5M4.5 14C4.5 16 6 16.8 8.5 16.8M2.6 8.8h3.8" fill="none" stroke="#1a1a1a" stroke-width="1.25"/></svg>
</div>
<svg style="left:0px;top:0px;" width="940" height="1072" viewBox="0 0 940 1072"><ellipse cx="634.2" cy="246.3" rx="86" ry="20.6" fill="none" stroke="#f5821f" stroke-width="4.2"/><ellipse cx="506.3" cy="455.4" rx="262.5" ry="58" fill="none" stroke="#f5821f" stroke-width="3"/><ellipse cx="227.2" cy="664.6" rx="157.5" ry="19.2" fill="none" stroke="#f5821f" stroke-width="3"/></svg>
</body>
</html>
